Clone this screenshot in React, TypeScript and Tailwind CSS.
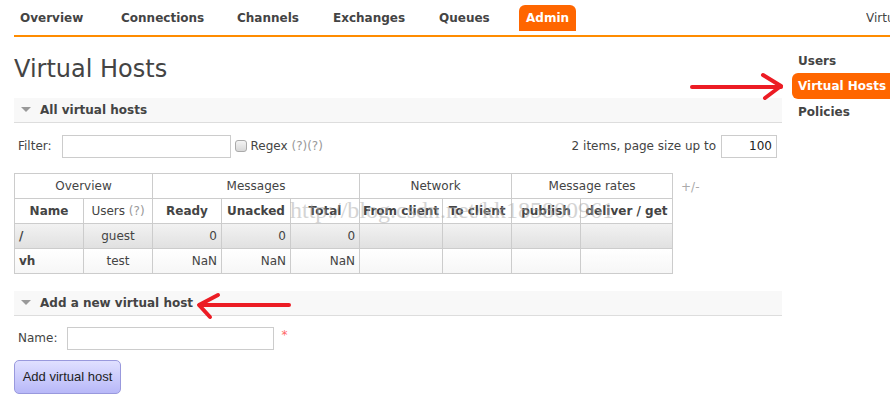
import React from "react";

const font = { fontFamily: '"DejaVu Sans", Verdana, sans-serif' };

function SectionHeader({ title }: { title: string }) {
  return (
    <div className="flex h-[25px] items-center border-b border-[#dddddd] bg-[#f8f8f8] pl-[6px]">
      <svg width="12" height="8" viewBox="0 0 12 8" className="mr-[8px]">
        <polygon points="1,1 11,1 6,6" fill="#999" />
      </svg>
      <span className="text-[12px] font-bold text-[#444]">{title}</span>
    </div>
  );
}

export default function App() {
  const navItems = [
    { n: "Overview", w: "w-[101px]" },
    { n: "Connections", w: "w-[116px]" },
    { n: "Channels", w: "w-[96px]" },
    { n: "Exchanges", w: "w-[106px]" },
    { n: "Queues", w: "w-[86px]" },
  ];
  const cell = "border border-[#cccccc] px-[4px] h-[25px] text-[12px] overflow-hidden whitespace-nowrap";
  return (
    <div className="relative h-[406px] w-[890px] overflow-hidden bg-white text-[#444]" style={font}>
      {/* Top nav */}
      <div className="ml-[14px] flex h-[37px] items-end border-b-2 border-[#ff8c00]">
        <div className="flex h-[35px] items-end pb-[4px]">
          {navItems.map((it) => (
            <div key={it.n} className={`flex h-[26px] items-center px-[6px] text-[12px] font-bold text-[#444] ${it.w}`}>
              {it.n}
            </div>
          ))}
          <div className="flex h-[26px] items-center rounded-t-[6px] bg-[#ff6600] px-[7px] text-[12px] font-bold text-white">
            Admin
          </div>
        </div>
        <div className="ml-auto flex h-[35px] items-end pb-[4px] pl-[10px] text-[12px] text-[#444]">
          <span className="flex h-[26px] w-[24px] items-center overflow-hidden whitespace-nowrap">Virtual host</span>
        </div>
      </div>

      <div className="flex">
        {/* Main column */}
        <div className="ml-[14px] w-[768px]">
          <h1 className="mt-[17px] h-[44px] text-[24px] leading-[30px] text-[#444]">Virtual Hosts</h1>

          <SectionHeader title="All virtual hosts" />

          <div className="mt-[11px] flex h-[24px] items-center">
            <span className="ml-[4px] text-[12px] text-[#444]">Filter:</span>
            <div className="ml-[10px] h-[23px] w-[169px] border border-[#cccccc]" />
            <div className="ml-[4px] h-[12px] w-[12px] rounded-[3px] border border-[#aaaaaa] bg-gradient-to-b from-[#f4f4f4] to-[#d8d8d8]" />
            <span className="ml-[4px] text-[12px] text-[#444]">
              Regex <span className="text-[#999]">(?)(?)</span>
            </span>
            <span className="ml-auto text-[12px] text-[#444]">2 items, page size up to</span>
            <div className="ml-[5px] mr-[5px] flex h-[23px] w-[56px] items-center justify-end border border-[#cccccc] pr-[4px] text-[12px] text-[#222]">
              100
            </div>
          </div>

          <div className="mt-[15px] flex items-start">
            <table className="w-[658px] border-collapse text-[#444]" style={{ tableLayout: "fixed" }}>
              <colgroup>
                <col className="w-[69px]" />
                <col className="w-[69px]" />
                <col className="w-[69px]" />
                <col className="w-[69px]" />
                <col className="w-[69px]" />
                <col className="w-[83px]" />
                <col className="w-[69px]" />
                <col className="w-[69px]" />
                <col className="w-[92px]" />
              </colgroup>
              <thead>
                <tr>
                  <th colSpan={2} className={`${cell} font-normal`}>Overview</th>
                  <th colSpan={3} className={`${cell} font-normal`}>Messages</th>
                  <th colSpan={2} className={`${cell} font-normal`}>Network</th>
                  <th colSpan={2} className={`${cell} font-normal`}>Message rates</th>
                </tr>
                <tr>
                  <th className={`${cell} font-bold`}>Name</th>
                  <th className={`${cell} font-normal`}>
                    Users <span className="text-[#999]">(?)</span>
                  </th>
                  <th className={`${cell} font-bold`}>Ready</th>
                  <th className={`${cell} font-bold`}>Unacked</th>
                  <th className={`${cell} font-bold`}>Total</th>
                  <th className={`${cell} !px-[2px] font-bold`}>From client</th>
                  <th className={`${cell} !px-[2px] font-bold`}>To client</th>
                  <th className={`${cell} font-bold`}>publish</th>
                  <th className={`${cell} font-bold`}>deliver / get</th>
                </tr>
              </thead>
              <tbody>
                <tr className="bg-gradient-to-b from-[#f2f2f2] to-[#e0e0e0]">
                  <td className={`${cell} font-bold`}>/</td>
                  <td className={`${cell} text-center`}>guest</td>
                  <td className={`${cell} text-right`}>0</td>
                  <td className={`${cell} text-right`}>0</td>
                  <td className={`${cell} text-right`}>0</td>
                  <td className={cell}></td>
                  <td className={cell}></td>
                  <td className={cell}></td>
                  <td className={cell}></td>
                </tr>
                <tr className="bg-gradient-to-b from-[#ffffff] to-[#f6f6f6]">
                  <td className={`${cell} font-bold`}>vh</td>
                  <td className={`${cell} text-center`}>test</td>
                  <td className={`${cell} text-right`}>NaN</td>
                  <td className={`${cell} text-right`}>NaN</td>
                  <td className={`${cell} text-right`}>NaN</td>
                  <td className={cell}></td>
                  <td className={cell}></td>
                  <td className={cell}></td>
                  <td className={cell}></td>
                </tr>
              </tbody>
            </table>
            <span className="ml-[8px] mt-[5px] text-[12px] text-[#aaa]">+/-</span>
          </div>

          <div className="mt-[17px]">
            <SectionHeader title="Add a new virtual host" />
          </div>

          <div className="mt-[10px] flex h-[24px] items-center">
            <span className="ml-[4px] text-[12px] text-[#444]">Name:</span>
            <div className="ml-[10px] h-[23px] w-[207px] border border-[#cccccc]" />
            <span className="ml-[7px] self-start text-[12px] text-[#f66]">*</span>
          </div>

          <button
            className="mt-[10px] h-[34px] w-[107px] rounded-[5px] border border-[#9999dd] bg-gradient-to-b from-[#e0e0ff] to-[#b8b8f8] text-[13px] text-[#222]"
            style={{ fontFamily: '"Liberation Sans", Arial, sans-serif' }}
          >
            Add virtual host
          </button>
        </div>

        {/* Right sidebar */}
        <div className="ml-[10px] mt-[12px] flex flex-1 flex-col">
          <div className="flex h-[24px] items-center pl-[6px] text-[12px] font-bold text-[#444]">Users</div>
          <div className="flex h-[26px] items-center rounded-l-[6px] bg-[#ff6600] pl-[6px] text-[12px] font-bold text-white">
            Virtual Hosts
          </div>
          <div className="flex h-[26px] items-center pl-[6px] text-[12px] font-bold text-[#444]">Policies</div>
        </div>
      </div>

      {/* Watermark */}
      <div
        className="pointer-events-none absolute left-[290px] top-[196px] whitespace-nowrap text-[24px] leading-[28px] text-[#aaa] opacity-50"
        style={{ fontFamily: '"Liberation Serif", "Times New Roman", serif' }}
      >
        http://blog.csdn.net/kk185800961
      </div>

      {/* Red arrows */}
      <svg className="pointer-events-none absolute left-0 top-0" width="890" height="406">
        <g stroke="#ec1c24" strokeWidth="4" strokeLinecap="round" strokeLinejoin="round" fill="none">
          <path d="M692 87 L781 87" />
          <path d="M763 75 L781 86 L765 98" />
          <path d="M289 305 L200 305" />
          <path d="M218 295 L199 305 L210 317" />
        </g>
      </svg>
    </div>
  );
}
